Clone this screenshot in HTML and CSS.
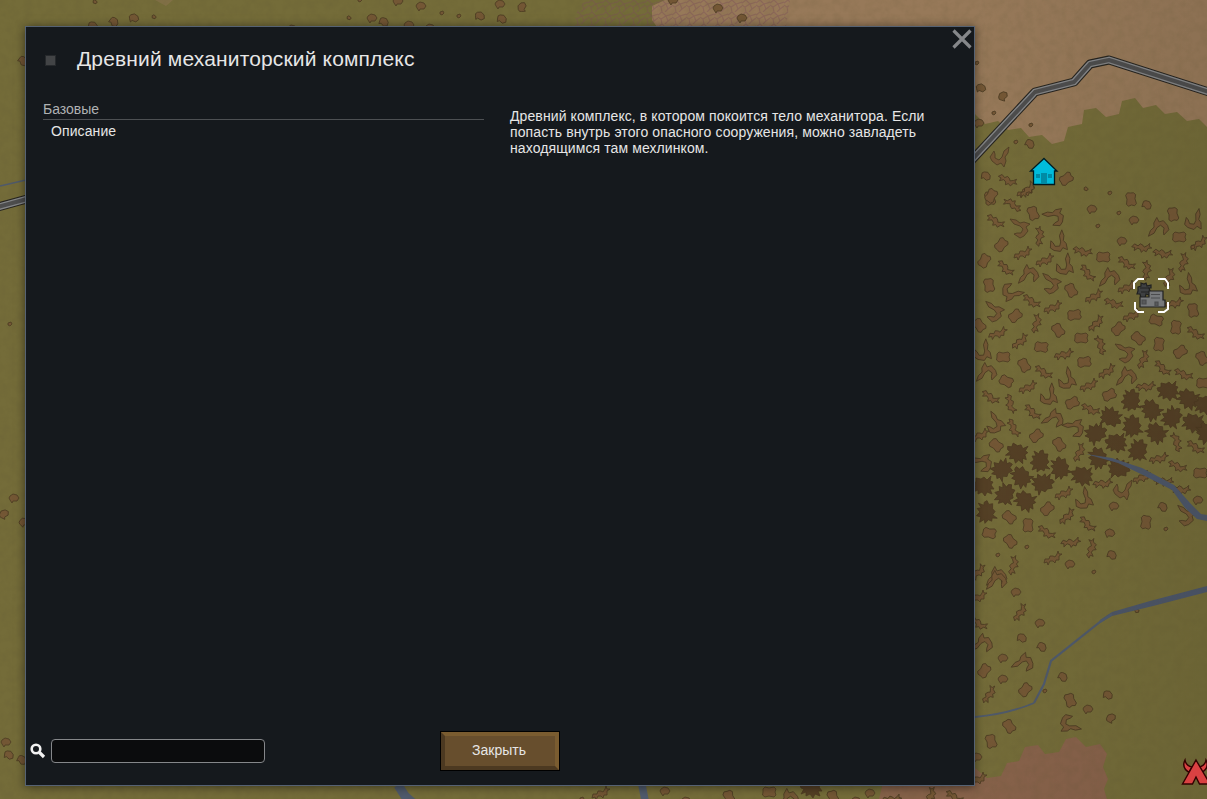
FILE: index.html
```html
<!DOCTYPE html>
<html lang="ru">
<head>
    <meta charset="UTF-8">
    <meta name="viewport" content="width=device-width, initial-scale=1.0">
    <title>Древний механиторский комплекс</title>
    <link rel="stylesheet" href="styles.css">
</head>
<body>

    <svg class="map" viewBox="0 0 1207 799" aria-hidden="true">
        <defs>
            <linearGradient id="shade">
                <stop offset="0.8" stop-color="#000" stop-opacity="0"/>
                <stop offset="1" stop-color="#000" stop-opacity="0.07"/>
            </linearGradient>
            <filter id="grain" x="0" y="0" width="100%" height="100%">
                <feTurbulence type="fractalNoise" baseFrequency="0.12" numOctaves="4" seed="4"/>
                <feColorMatrix values="0 0 0 0 0.1  0 0 0 0 0.08  0 0 0 0 0.03  0.7 0 0 0 -0.25"/>
            </filter>
            <pattern id="cracks" width="14" height="12" patternUnits="userSpaceOnUse">
                <path d="M0 3l4-3 4 4 6-2M4 12l-1-5-3-2M3 7l5-3 2 5-3 3M10 9l4-3" fill="none" stroke="#7c4f58" stroke-width="1.2"/>
            </pattern>

            <!-- hills -->
            <path id="b" d="M-6-3L-4-5 0-4 5-5 7-3 6 0 7 3 5 5 0 4-4 5-6.500 3-6 0z"/>
            <path id="c" d="M-10-9L-4-8 0-5 4-6 10-4 6-1 8 3 4 8 0 10-6 6-3 5 1 5 3 1 0-2-6-4z"/>
            <path id="s" d="M-9 5L-8 1-4 1-3-2 0-2 2-1 4-4 5-7 6-4 9-4 6-2 6 2 3 2 2 5 0 3-3 3-5 7-6 4z"/>
            <path id="p" d="M-4-2L-1-4 3-3 5 0 3 3-1 3-2 5-4 2-5 0z"/>
            <path id="t" d="M-2-1L1-2 2 0 0 2-2 1z"/>
            <path id="d" d="M-11-3L-7-4-7-8-2-7 1-9 4-6 8-10 7-5 10-4 8-1 11 3 7 3 9 8 4 6 2 10-1 6-5 8-5 4-10 6-7 1-10 0z"/>

            <path id="road" d="M970 162L1035 92 1074 82 1090 64 1109 60 1209 92M-2 207L27 199"/>
        </defs>

        <rect width="1207" height="799" fill="#746c39"/>

        <!-- deserts -->
        <path class="desert" d="M665 0L652 6V20L657 27 760 100 975 114 985 124 998 121 1008 130 1021 128 1029 137 1042 135 1052 144 1064 141 1068 127 1082 124 1084 110 1096 108 1106 117 1119 114 1122 101 1135 98 1143 108 1156 105 1165 114 1177 112 1187 121 1199 119 1207 127V0z"/>
        <path class="desert" d="M155 0L166 6 173 0z" opacity="0.4"/>
        <path class="clay" d="M879 799L886 770 975 768 987 778 1001 776 1007 763 1019 761 1025 747 1038 745 1045 754 1059 752 1066 739 1076 737 1086 747 1100 744 1107 754 1103 767 1108 779 1104 789 1107 799z"/>
        <path fill="url(#cracks)" opacity="0.4" d="M585 0H790L786 27H573L577 12z"/>

        <g id="hills"></g>

        <!-- rivers -->
        <g class="river">
            <path class="fill" d="M1086 454L1112 458 1142 468 1174 485 1190 503 1201 514 1207 515V521L1197 519 1185 508 1172 490 1145 476 1118 463z"/>
            <path class="fill" d="M1112 612L1150 601 1207 586V592L1153 606 1112 616 1098 624 1100 620z"/>
            <path d="M1112 614L1100 622 1051 661 1044 684 1034 703" stroke-width="2.2"/>
            <path d="M1034 703Q1008 714 975 717" stroke-width="1.8"/>
            <path d="M0 186L26 180" stroke-width="1.6"/>
            <path d="M398 785L405 796 413 803" stroke-width="9"/>
            <path d="M642 785L645 800" stroke-width="7.5"/>
        </g>

        <!-- road -->
        <g class="road">
            <use href="#road" class="edge"/>
            <use href="#road" class="side"/>
            <use href="#road" class="middle"/>
        </g>

        <rect width="1207" height="799" fill="url(#shade)"/>
        <rect width="1207" height="799" filter="url(#grain)" opacity="0.35"/>

        <!-- settlement -->
        <g class="settlement">
            <path d="M1044 158.500L1057 171H1054.500V184.500H1033.500V171H1030.500z"/>
            <path class="door" d="M1041 173h6v11h-6zM1036 174h4v4h-4zM1048 174h4v4h-4z"/>
        </g>

        <!-- ancient complex -->
        <g class="complex">
            <path class="gear" d="M1138 287l3-1 0-3 3 1 2-1 1 3 4-1v3h-2l1 3 2 1-3 3-3-1-1 4-4 0-1-4-3 0 1-3z"/>
            <path class="gear-line" d="M1140 288h9M1141 292h8"/>
            <path class="block" d="M1140 307V297H1149V291H1163V300H1165V307z"/>
            <path class="detail" d="M1151 294.500h9M1151 298h9M1142 300h4v4h-4zM1155 302h3v4h-3z"/>
        </g>
        <path class="selection" d="M1134 289V283L1138 279H1144M1158 279H1165L1168 283V289M1168 302V309L1164 312H1158M1144 312H1138L1135 309V302"/>

        <!-- tribe camp -->
        <g class="camp">
            <path d="M1190 773Q1181 768 1185 760Q1186 766 1192 767L1189 772zM1201 773Q1210 768 1206 760Q1205 766 1199 767z"/>
            <path d="M1196 760L1210 784H1199.500L1196 777 1192.500 784H1182.500z"/>
        </g>
    </svg>

    <div class="window">
        <button class="cross" aria-label="Закрыть">
            <svg width="20" height="20" viewBox="0 0 20 20"><path d="M1.500 1.500L18.500 18.500M18.500 1.500L1.500 18.500"/></svg>
        </button>

        <div class="title">
            <span class="icon"></span>
            <h1>Древний механиторский комплекс</h1>
        </div>

        <div class="content">
            <div class="stats">
                <h2>Базовые</h2>
                <p>Описание</p>
            </div>
            <p class="description">Древний комплекс, в котором покоится тело механитора. Если попасть внутрь этого опасного сооружения, можно завладеть находящимся там мехлинком.</p>
        </div>

        <div class="footer">
            <label class="search">
                <svg width="16" height="16" viewBox="0 0 16 16"><circle cx="6" cy="6" r="4.300"/><path d="M9.500 9.500L14 14"/></svg>
                <input type="text">
            </label>
            <button class="close">Закрыть</button>
        </div>
    </div>

    <script src="map.js"></script>
</body>
</html>
```

FILE: styles.css
```css
body{
    margin: 0;
    height: 799px;
    position: relative;
    overflow: hidden;
    background-color: #746c39;
    font-family: "Liberation Sans", Arial, sans-serif;
    font-size: 14px;
    line-height: 16px;
    color: #e6e6e6;
}

h1, h2, p{
    margin: 0;
    font-weight: normal;
}

/* map */
.map{
    display: block;
    width: 1207px;
    height: 799px;
}

.desert{
    fill: #977959;
}

.clay{
    fill: #87624a;
}

#hills use{
    fill: #745735;
    stroke: #4b3b22;
    stroke-width: 0.8;
    stroke-linejoin: round;
}

#hills .dark{
    fill: #543f25;
    stroke: #4c3a21;
}

.river path{
    fill: none;
    stroke: #4f5a6d;
}

.river .fill{
    fill: #4c566a;
    stroke: none;
}

.road{
    fill: none;
    stroke-linejoin: round;
}

.edge{
    stroke: #25231f;
    stroke-width: 9;
}

.side{
    stroke: #85878a;
    stroke-width: 6.8;
}

.middle{
    stroke: #4d4d4e;
    stroke-width: 4;
}

.settlement{
    fill: #00bcdc;
    stroke: #001a20;
    stroke-width: 1.3;
}

.settlement .door{
    fill: #008ba5;
    stroke: none;
}

.complex{
    stroke: #202020;
    stroke-width: 1.2;
}

.gear{
    fill: #3e4042;
}

.gear-line{
    stroke: #222;
}

.block{
    fill: #77797b;
}

.detail{
    fill: #58595b;
    stroke: #4b4c4e;
}

.selection{
    fill: none;
    stroke: #fff;
    stroke-width: 2;
}

.camp path{
    fill: #da4142;
    stroke: #300;
    stroke-width: 1.4;
}

/* window */
.window{
    position: absolute;
    left: 25px;
    top: 26px;
    width: 950px;
    height: 760px;
    box-sizing: border-box;
    display: flex;
    flex-direction: column;
    border: 1px solid #566273;
    background-color: #15191d;
    box-shadow: 0 1px 9px rgba(0, 0, 0, .5);
}

.cross{
    position: absolute;
    top: 2px;
    right: 2px;
    width: 20px;
    height: 20px;
    padding: 0;
    border: 0;
    background: none;
}

.cross svg{
    display: block;
}

.cross path{
    stroke: #85878a;
    stroke-width: 3.2;
}

.title{
    display: flex;
    align-items: center;
    padding: 19px 19px 0;
    height: 26px;
}

.title .icon{
    width: 9px;
    height: 9px;
    margin: 3px 21px 0 0;
    border: 1px solid #26292c;
    background-color: #424446;
}

.title h1{
    font-size: 21px;
    line-height: 26px;
    letter-spacing: 0.15px;
}

.content{
    display: flex;
    flex: 1;
    padding: 29px 17px 0;
}

.stats{
    width: 441px;
    margin-right: 26px;
}

.stats h2{
    padding-bottom: 2px;
    border-bottom: 1px solid #4d5053;
    font-size: 14px;
    color: #b0b2b3;
}

.stats p{
    padding: 3px 8px;
    letter-spacing: 0.1px;
}

.description{
    width: 424px;
    padding-top: 7px;
    letter-spacing: 0.1px;
}

.footer{
    display: flex;
    align-items: center;
    padding: 0 4px 14px;
}

.search{
    display: flex;
    align-items: center;
    width: 410px;
}

.search svg{
    margin-right: 5px;
    fill: none;
    stroke: #f2f2f2;
    stroke-width: 2.6;
}

.search path{
    stroke-width: 3.2;
}

.search input{
    width: 214px;
    height: 24px;
    box-sizing: border-box;
    border: 1px solid #85878a;
    border-radius: 4px;
    background-color: #0b0c0d;
    color: #e6e6e6;
}

.close{
    width: 120px;
    height: 40px;
    padding: 0 2px 2px 0;
    border: 5px solid;
    border-color: #7a5c30 #7a5c30 #4c3921 #4c3921;
    outline: 1px solid #000;
    outline-offset: -1px;
    background-color: #674e2d;
    font: inherit;
    color: #e6e6e6;
}
```

FILE: map.js
```js
// x, y, rotation for every hill on the map
var hills = {
    // blocks
    b: [
        [990,198,80],[1033,213,70],[1001,245,-50],[984,261,-60],[989,285,80],[1071,290,60],[1015,316,-40],[1074,315,-8],
        [1058,330,55],[1081,338,0],[1041,347,5],[1003,357,0],[1024,365,60],[1084,362,-8],[1006,381,25],[1103,257,0],
        [1131,199,85],[1173,214,80],[1179,237,0],[1156,320,15],[1193,310,80],[1176,327,95],[1118,329,-45],[1138,338,40],
        [1159,344,95],[1180,352,-35],[1202,358,60],[1203,383,0],[979,325,50],[1109,395,-25],[1072,403,-25],[1036,436,-40],
        [996,445,40],[1059,444,55],[1200,473,0],[1047,509,-45],[1009,517,40],[1028,525,90],[989,533,10],[1010,541,50],
        [1146,522,95],[984,671,-55],[1025,690,-50],[1070,700,70],[1009,726,55],[991,741,75],[1066,179,-35],[991,196,-60],
        [729,797,70],[769,792,0],[833,797,70]
    ],
    // crescents
    c: [
        [1020,228,0],[1055,217,-30],[1059,243,60],[1065,266,60],[1029,275,-80],[1051,284,10],[1011,292,140],[994,312,10],
        [1110,278,-80],[1159,228,-80],[1194,221,70],[1188,286,50],[1125,353,0],[1127,377,-80],[1067,380,50],[987,373,-80],
        [983,352,60],[1049,396,60],[1054,419,-60],[995,424,30],[1075,428,-30],[983,463,-30],[1123,490,90],[1084,500,50],
        [1186,516,10],[997,577,-80],[997,581,-80],[983,644,-70],[1024,663,-60],[1069,724,160],[1000,157,90],[789,799,-80]
    ],
    // ridges
    s: [
        [1012,205,-120],[996,221,60],[1039,236,-60],[1023,253,0],[1006,268,70],[1045,260,0],[1083,251,40],[1088,273,80],
        [1094,296,-5],[1114,303,45],[1032,301,60],[1053,307,0],[1036,323,-50],[1096,323,-20],[998,333,5],[1020,341,-15],
        [1100,345,-80],[1064,354,10],[1044,372,60],[1107,371,-10],[1143,359,-40],[1163,368,70],[1184,374,50],[1132,315,0],
        [1127,287,0],[1174,303,10],[1146,270,-60],[1169,277,-40],[1183,262,-50],[1163,253,35],[1142,247,30],[1127,263,60],
        [1199,243,-10],[1196,333,60],[1089,385,0],[1146,386,20],[1026,191,0],[1028,387,0],[991,397,60],[1011,404,100],
        [1033,412,70],[1014,428,90],[1091,409,50],[1079,452,-40],[1159,458,10],[1176,442,-80],[1196,447,60],[1178,466,50],
        [980,435,0],[1103,483,20],[1064,493,0],[1181,489,30],[1142,477,0],[1164,481,30],[1067,516,-20],[1047,532,60],
        [1088,524,70],[1071,542,20],[1091,548,-50],[1053,558,0],[1013,565,-50],[978,572,-20],[1020,612,-30],[989,694,-30],
        [978,597,0],[979,623,60],[978,779,0],[1008,180,50],[1028,189,-20],[601,793,0],[892,799,20],[930,796,-40],[955,797,60]
    ],
    // pebbles
    p: [
        [1134,220,0],[1092,209,0],[1122,241,0],[1147,205,50],[1163,507,60],[1110,533,10],[1070,564,0],[1114,506,0],
        [1198,500,0],[1112,555,50],[1016,592,0],[1040,623,0],[1022,638,40],[1042,647,60],[1003,658,0],[1003,679,0],
        [1063,677,60],[1088,709,0],[1111,718,-30],[1108,695,40],[977,757,0],[981,88,20],[1003,96,-40],[979,123,0],
        [1030,144,60],[986,176,40],[93,26,40],[114,22,70],[134,18,20],[292,29,0],[372,18,0],[384,22,50],[398,1,0],
        [421,6,0],[409,25,0],[430,28,0],[480,16,30],[500,4,0],[522,7,-60],[502,19,40],[673,0,0],[718,8,0],[742,18,0],
        [665,791,0],[686,801,0],[856,801,0],[870,793,0],[4,514,-30],[14,498,0],[24,522,-10],[6,742,0],[9,755,40],[22,760,60],[23,61,70]
    ],
    // small stones
    t: [
        [1119,213,0],[1098,226,0],[998,555,0],[1027,547,0],[1094,572,0],[1166,529,0],[1137,611,40],[1045,691,0],
        [994,113,0],[1031,125,0],[977,63,0],[1016,142,0],[1086,189,60],[1110,193,0],[95,2,60],[154,17,60],[349,18,60],
        [360,0,0],[442,13,0],[459,16,0],[582,799,0],[10,324,0],[1193,247,0]
    ],
    // mountains
    d: [
        [1168,391,0],[1188,399,30],[1131,400,90],[1151,410,50],[1172,417,120],[1193,423,15],[1111,417,200],[1132,426,80],
        [1096,433,150],[1156,433,40],[1116,443,0],[1138,450,100],[1098,458,60],[1119,468,180],[1017,453,20],[1040,461,90],
        [1002,469,140],[1060,468,70],[1082,476,10],[1021,477,50],[1043,483,160],[983,486,0],[1005,494,110],[1025,501,30],
        [986,512,80],[1205,405,0],[1206,433,60],[811,788,0]
    ]
}

var layer = document.getElementById('hills')

for(var type in hills){
    hills[type].forEach(function(hill){
        var use = document.createElementNS('http://www.w3.org/2000/svg', 'use')
        use.setAttribute('href', '#' + type)
        use.setAttribute('transform', 'translate(' + hill[0] + ' ' + hill[1] + ') rotate(' + hill[2] + ')')
        if(type === 'd')
            use.setAttribute('class', 'dark')
        layer.appendChild(use)
    })
}
```
